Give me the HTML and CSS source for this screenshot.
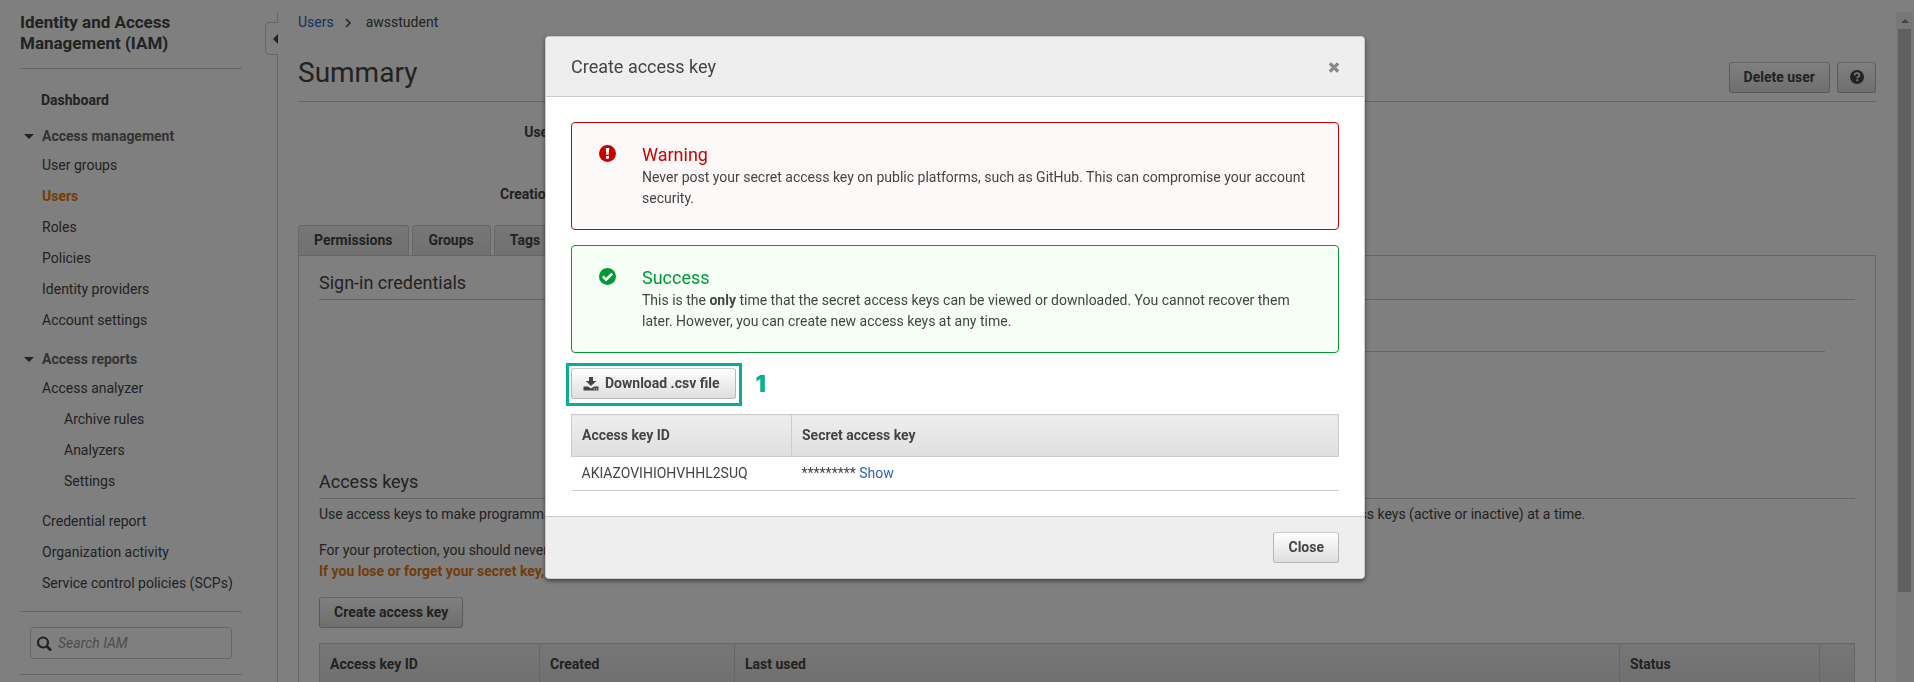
FILE: index.html
```html
<!DOCTYPE html>
<html lang="en">
<head>
<meta charset="utf-8">
<title>IAM - Create access key</title>
<link rel="stylesheet" href="styles.css">
</head>
<body>
<div class="app">
  <aside class="sidebar">
    <h2 class="sidebar-title">Identity and Access Management (IAM)</h2>
    <nav class="nav" aria-label="IAM">
      <a class="nav-home" href="#">Dashboard</a>
      <h3 class="nav-group"><span class="caret"></span>Access management</h3>
      <ul class="nav-list">
        <li><a href="#">User groups</a></li>
        <li><a class="current" href="#">Users</a></li>
        <li><a href="#">Roles</a></li>
        <li><a href="#">Policies</a></li>
        <li><a href="#">Identity providers</a></li>
        <li><a href="#">Account settings</a></li>
      </ul>
      <h3 class="nav-group"><span class="caret"></span>Access reports</h3>
      <ul class="nav-list">
        <li><a href="#">Access analyzer</a>
          <ul class="nav-sublist">
            <li><a href="#">Archive rules</a></li>
            <li><a href="#">Analyzers</a></li>
            <li><a href="#">Settings</a></li>
          </ul>
        </li>
        <li><a href="#">Credential report</a></li>
        <li><a href="#">Organization activity</a></li>
        <li><a href="#">Service control policies (SCPs)</a></li>
      </ul>
    </nav>
    <form class="search">
      <label class="search-box">
        <svg width="16" height="16" viewBox="0 0 16 16" role="img" aria-label="Search"><circle cx="6" cy="7.500" r="5" fill="none" stroke="#444" stroke-width="2.200"/><path d="M10 11.500L13.300 14.700" stroke="#444" stroke-width="2.600" stroke-linecap="round"/></svg>
        <input type="text" placeholder="Search IAM">
      </label>
    </form>
    <button class="collapse" type="button" aria-label="Collapse navigation"><span class="collapse-arrow"></span></button>
  </aside>

  <main class="main">
    <nav class="breadcrumb" aria-label="Breadcrumb">
      <a href="#">Users</a>
      <svg width="6" height="10" viewBox="0 0 6 10" aria-hidden="true"><path d="M1 1l4 4-4 4" fill="none" stroke="#444" stroke-width="1.5"/></svg>
      <span>awsstudent</span>
    </nav>
    <header class="page-head">
      <h1>Summary</h1>
      <div class="actions">
        <button class="btn" type="button">Delete user</button>
        <button class="btn btn-help" type="button" aria-label="Help">
          <svg width="14" height="14" viewBox="0 0 14 14" aria-hidden="true"><circle cx="7" cy="7" r="7" fill="#444"/><path d="M4.600 5.300C4.700 3.800 5.700 3.100 7 3.100c1.400 0 2.400.8 2.400 2 0 1.700-2.100 1.600-2.100 3.100" fill="none" stroke="#f3f3f3" stroke-width="1.800"/><rect x="6.300" y="9.300" width="1.900" height="1.900" fill="#f3f3f3"/></svg>
        </button>
      </div>
    </header>
    <dl class="details">
      <dt>User ARN</dt>
      <dt>Path</dt>
      <dt>Creation time</dt>
    </dl>
    <div class="tabs" role="tablist">
      <button class="tab" role="tab" type="button">Permissions</button>
      <button class="tab" role="tab" type="button">Groups</button>
      <button class="tab" role="tab" type="button">Tags</button>
    </div>
    <div class="panel">
      <section class="signin">
        <h2 class="section-title">Sign-in credentials</h2>
        <div class="signin-row"></div>
      </section>
      <section>
        <h2 class="section-title">Access keys</h2>
        <p class="intro">Use access keys to make programmatic calls to AWS from the AWS CLI, Tools for PowerShell, AWS SDKs, or direct AWS API calls. You can have a maximum of two access keys (active or inactive) at a time.</p>
        <p class="advice">For your protection, you should never share your secret keys with anyone. As a best practice, we recommend frequent key rotation.<br><strong>If you lose or forget your secret key, you cannot retrieve it. Instead, create a new access key and make the old key inactive.</strong></p>
        <button class="btn" type="button">Create access key</button>
        <table class="grid keys">
          <thead><tr><th class="col-id">Access key ID</th><th class="col-created">Created</th><th>Last used</th><th class="col-status">Status</th><th class="col-remove"></th></tr></thead>
        </table>
      </section>
    </div>
  </main>
  <div class="scrollbar" aria-hidden="true"><span class="scroll-up"></span><span class="scroll-thumb"></span></div>
</div>

<div class="backdrop">
  <div class="modal" role="dialog" aria-modal="true" aria-labelledby="modal-title">
    <header class="modal-head">
      <h2 id="modal-title">Create access key</h2>
      <button class="modal-x" type="button" aria-label="Close dialog">
        <svg width="12" height="12" viewBox="0 0 12 12" aria-hidden="true"><path d="M3 3.500L9 9.500M9 3.500L3 9.500" stroke="#888" stroke-width="3.200" stroke-linecap="square"/></svg>
      </button>
    </header>
    <div class="modal-body">
      <div class="alert alert-warning">
        <svg width="17" height="17" viewBox="0 0 17 17" aria-hidden="true"><circle cx="8.500" cy="8.500" r="8.500" fill="#c00"/><path d="M6.800 2.900h3.400l-.4 6.800H7.200z" fill="#fff"/><rect x="7" y="11" width="3" height="2.700" fill="#fff"/></svg>
        <div><h3>Warning</h3><p>Never post your secret access key on public platforms, such as GitHub. This can compromise your account security.</p></div>
      </div>
      <div class="alert alert-success">
        <svg width="17" height="17" viewBox="0 0 17 17" aria-hidden="true"><circle cx="8.500" cy="8.500" r="8.500" fill="#093"/><path d="M3.800 8.400l3.300 3.300 6.100-6.100" fill="none" stroke="#fff" stroke-width="2.600"/></svg>
        <div><h3>Success</h3><p>This is the <strong>only</strong> time that the secret access keys can be viewed or downloaded. You cannot recover them later. However, you can create new access keys at any time.</p></div>
      </div>
      <div class="download">
        <div class="marked">
          <button class="btn" type="button">
            <svg width="16" height="14" viewBox="0 0 16 14" aria-hidden="true"><path d="M6 0h4v4h3.300L8 9 2.700 4H6z" fill="#444"/><path d="M.5 9.500h4.400L8 11.500l3.100-2h4.400v4H.5z" fill="#444"/><path d="M10.800 11.400h1.200v1h-1.200zM13.100 11.400h1.200v1h-1.200z" fill="#eee"/></svg>
            Download .csv file
          </button>
        </div>
        <span class="step">1</span>
      </div>
      <table class="grid secret">
        <thead><tr><th class="col-id">Access key ID</th><th>Secret access key</th></tr></thead>
        <tbody><tr><td>AKIAZOVIHIOHVHHL2SUQ</td><td>********* <a href="#">Show</a></td></tr></tbody>
      </table>
    </div>
    <footer class="modal-foot"><button class="btn" type="button">Close</button></footer>
  </div>
</div>
</body>
</html>
```
FILE: styles.css
```css
* { box-sizing: border-box; }

body {
  margin: 0;
  height: 100vh;
  overflow: hidden;
  background: #fff;
  color: #444;
  font: 14px/21px Roboto, "Liberation Sans", sans-serif;
}

h1, h2, h3, p, ul, dl { margin: 0; padding: 0; font-weight: 400; }
ul { list-style: none; }
a { color: #2a63c0; text-decoration: none; }
strong { font-weight: 700; }
button, input { font: inherit; color: inherit; }
svg { flex: none; }

.app {
  display: flex;
  height: 100vh;
  padding: 12px 1px 0 0;
}

/* Sidebar */
.sidebar {
  position: relative;
  flex: none;
  width: 278px;
  padding: 0 35px 0 20px;
  border-right: 1px solid #ccc;
}
.sidebar-title {
  padding-bottom: 14px;
  border-bottom: 1px solid #ccc;
  font-size: 17px;
  font-weight: 700;
}
.nav {
  padding: 16px 0 9px;
  border-bottom: 1px solid #ccc;
}
.nav a { color: #444; }
.nav a.current { color: #e47911; font-weight: 700; }
.nav-home {
  display: block;
  padding: 5px 0 5px 21px;
  font-weight: 700;
}
.nav-group {
  display: flex;
  align-items: center;
  gap: 8px;
  padding: 10px 0 3px 4px;
  color: #666;
  font-size: 14px;
  font-weight: 700;
}
.caret {
  border: 5px solid transparent;
  border-bottom-width: 0;
  border-top-color: #444;
}
.nav-list { padding: 0 0 3px 22px; white-space: nowrap; }
.nav-list a { display: block; padding: 5px 0; }
.nav-sublist { padding: 0 0 9px 22px; }
.search {
  padding: 15px 10px;
  border-bottom: 1px solid #ccc;
}
.search-box {
  display: flex;
  align-items: center;
  gap: 5px;
  height: 32px;
  padding: 0 6px;
  border: 1px solid #ccc;
  border-radius: 3px;
}
.search-box input {
  width: 100%;
  min-width: 0;
  padding: 0;
  border: 0;
  background: none;
}
.search-box input::placeholder { color: #999; font-style: italic; }
.collapse {
  position: absolute;
  top: 10px;
  right: -1px;
  display: flex;
  align-items: center;
  justify-content: flex-end;
  width: 13px;
  height: 33px;
  padding: 0;
  border: 1px solid #ccc;
  border-right: 0;
  border-radius: 5px 0 0 5px;
  background: #fff;
}
.collapse-arrow {
  border: 5px solid transparent;
  border-left-width: 0;
  border-right-color: #444;
}

/* Page content */
.main {
  flex: 1;
  min-width: 0;
  overflow: hidden;
  padding: 0 20px;
}
.breadcrumb {
  display: flex;
  align-items: center;
  gap: 11px;
}
.breadcrumb span { padding-left: 4px; }
.page-head {
  display: flex;
  align-items: center;
  justify-content: space-between;
  padding: 18px 0 6px;
  border-bottom: 1px solid #ccc;
}
.page-head h1 { font-size: 28px; line-height: 44px; }
.actions { display: flex; gap: 7px; padding-top: 8px; }
.btn {
  display: inline-flex;
  align-items: center;
  justify-content: center;
  gap: 6px;
  height: 31px;
  padding: 0 14px;
  border: 1px solid #b7b7b7;
  border-top-color: #ccc;
  border-radius: 3px;
  background: linear-gradient(#fff, #dedede);
  font-weight: 700;
  white-space: nowrap;
}
.btn-help { width: 39px; padding: 0; }
.details {
  width: 287px;
  padding: 20px 0 10px;
  text-align: right;
  font-weight: 700;
}
.details dt { padding-bottom: 10px; }
.tabs { display: flex; gap: 3px; }
.tab {
  height: 30px;
  padding: 0 16px 0 15px;
  border: 1px solid #ccc;
  border-bottom: 0;
  border-radius: 3px 3px 0 0;
  background: linear-gradient(#eee, #e2e2e2);
  font-weight: 700;
}
.panel {
  height: 100%;
  padding: 16px 20px;
  border: 1px solid #ccc;
}
.section-title {
  padding-bottom: 5px;
  border-bottom: 1px solid #ccc;
  font-size: 18px;
  line-height: 22px;
}
.signin { padding-bottom: 119px; }
.signin-row {
  height: 52px;
  margin: 0 30px 0 270px;
  border-bottom: 1px solid #ccc;
}
.intro { padding: 5px 0 15px; }
.advice { padding-bottom: 15px; }
.advice strong { color: #e47911; }

/* Tables */
.grid {
  width: 100%;
  border-collapse: collapse;
  table-layout: fixed;
  text-align: left;
}
.grid th {
  height: 42px;
  padding: 0 10px;
  border: 1px solid #ccc;
  background: linear-gradient(#eee, #dfdfdf);
}
.grid td {
  height: 34px;
  padding: 0 10px;
  border-bottom: 1px solid #ccc;
}
.keys { margin-top: 15px; }
.col-id { width: 220px; }
.col-created { width: 195px; }
.col-status { width: 200px; }
.col-remove { width: 35px; }

.scrollbar {
  display: flex;
  flex-direction: column;
  align-items: center;
  flex: none;
  width: 17px;
  background: #f1f1f1;
}
.scroll-up {
  margin: 7px 0 6px;
  border: 4px solid transparent;
  border-top-width: 0;
  border-bottom-color: #888;
}
.scroll-thumb {
  width: 13px;
  height: 84%;
  background: #c1c1c1;
}

/* Dialog */
.backdrop {
  position: fixed;
  inset: 0;
  display: flex;
  align-items: flex-start;
  justify-content: center;
  padding: 36px 4px 0 0;
  background: rgba(0, 0, 0, .5);
}
.modal {
  width: 820px;
  max-width: 100%;
  overflow: hidden;
  border: 1px solid #ccc;
  border-radius: 4px;
  background: #fff;
  box-shadow: 0 2px 4px rgba(0, 0, 0, .5);
}
.modal-head {
  display: flex;
  align-items: center;
  justify-content: space-between;
  height: 60px;
  padding: 0 24px 0 25px;
  border-bottom: 1px solid #ccc;
  background: #eee;
}
.modal-head h2 { font-size: 18px; line-height: 24px; }
.modal-x {
  display: flex;
  padding: 0;
  border: 0;
  background: none;
}
.modal-body { padding: 25px; }
.alert {
  display: flex;
  gap: 26px;
  margin-bottom: 15px;
  padding: 20px 27px;
  border: 1px solid;
  border-radius: 4px;
}
.alert svg { margin-top: 2px; }
.alert h3 { font-size: 18px; line-height: 24px; }
.alert p { color: #444; }
.alert-warning { color: #c00; background: #fdf9f9; }
.alert-success { color: #093; background: #f6fef6; }
.download {
  display: flex;
  align-items: center;
  gap: 20px;
  padding-bottom: 15px;
}
.marked { position: relative; display: flex; }
.marked::after {
  content: "";
  position: absolute;
  inset: -5px -6px -7px -5px;
  border: 3px solid #05b092;
  pointer-events: none;
}
.marked .btn { padding: 0 15px 0 11px; }
.step {
  color: #05b092;
  font: 900 23px/24px Inter, sans-serif;
}
.modal-foot {
  display: flex;
  justify-content: flex-end;
  padding: 15px 25px;
  border-top: 1px solid #ccc;
  background: #eee;
}
```
